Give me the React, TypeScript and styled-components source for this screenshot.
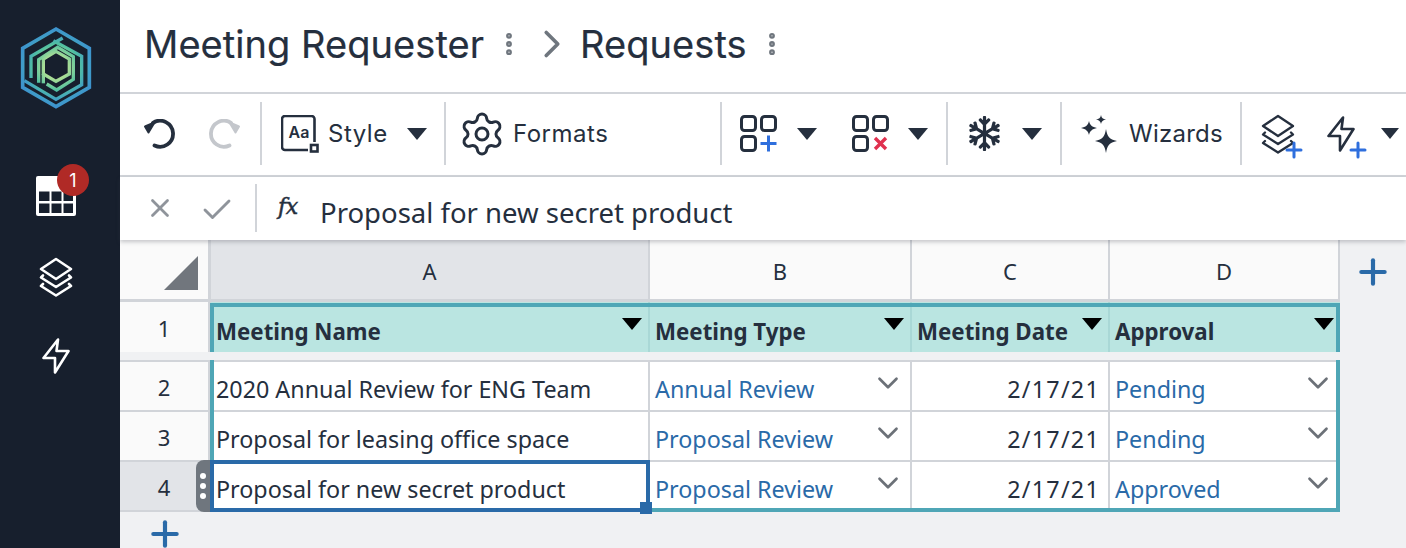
import React from "react";
import styled, { createGlobalStyle } from "styled-components";
import { Settings, X, Check, Plus, ChevronDown, ChevronRight, EllipsisVertical } from "lucide-react";
import { FaRegSnowflake } from "react-icons/fa";

const Global = createGlobalStyle`
  html, body { margin: 0; padding: 0; width: 1406px; height: 548px; overflow: hidden; background: #fff; }
  * { box-sizing: border-box; }
`;
const INK = "#252f3e";
const TEAL = "#4fa6b6";
const BLUE = "#2a6aa8";
const LINE = "#d1d4d9";
const COLS = "91px 439px 262px 198px 230px";

const Page = styled.div`display:flex;width:1406px;height:548px;overflow:hidden;font-family:"Noto Sans",sans-serif;color:${INK};`;
const Rail = styled.nav`width:120px;flex:none;background:#171f2d;display:flex;flex-direction:column;align-items:center;padding:24px 8px 0 0;color:#fff;`;
const RailItem = styled.div<{ $top: number }>`position:relative;margin-top:${p => p.$top}px;display:flex;`;
const Badge = styled.span`position:absolute;left:21px;top:-12px;width:32px;height:32px;border-radius:50%;background:#b02a26;color:#fff;font:18px "Inter",sans-serif;display:flex;align-items:center;justify-content:center;`;
const Main = styled.main`flex:1;min-width:0;display:flex;flex-direction:column;`;
const Header = styled.header`height:94px;flex:none;border-bottom:2px solid ${LINE};display:flex;align-items:center;padding:0 0 4px 24px;`;
const Title = styled.h1`margin:0;font:400 38px/1 "Inter",sans-serif;letter-spacing:0.05px;-webkit-text-stroke:0.2px ${INK};`;
const Toolbar = styled.div`height:83px;flex:none;border-bottom:2px solid ${LINE};display:flex;align-items:stretch;padding:8px 0 10px;overflow:hidden;`;
const Group = styled.div<{ $w: number; $gap?: number; $pad?: number }>`width:${p => p.$w}px;flex:none;display:flex;align-items:center;gap:${p => p.$gap ?? 0}px;padding-left:${p => p.$pad ?? 0}px;border-right:2px solid ${LINE};&:last-child{border-right:none;}`;
const Label = styled.span<{ $ml?: number; $ls?: number }>`font:400 24px/1 "Inter",sans-serif;letter-spacing:${p => p.$ls ?? 0.5}px;margin-left:${p => p.$ml ?? 0}px;`;
const Caret = styled.span<{ $ml?: number; $dark?: boolean; $w?: number }>`display:block;flex:none;margin-left:${p => p.$ml ?? 0}px;width:0;height:0;border-left:${p => p.$w ?? 10}px solid transparent;border-right:${p => p.$w ?? 10}px solid transparent;border-top:${p => (p.$w ?? 10) + 2}px solid ${p => p.$dark ? "#000" : INK};`;
const Formula = styled.div`height:63px;flex:none;display:flex;align-items:center;box-shadow:0 2px 4px rgba(60,65,75,.28);position:relative;z-index:1;background:#fff;`;
const FormulaIcons = styled.div`width:137px;height:48px;flex:none;margin-top:-2px;display:flex;align-items:center;padding-left:25px;border-right:2px solid ${LINE};color:#8f949b;`;
const CheckWrap = styled.span`display:flex;margin:4px 0 0 24px;`;
const Fx = styled.span`font:italic 400 22px/1 "DejaVu Serif",serif;-webkit-text-stroke:0.5px ${INK};margin:-4px 0 0 21px;width:42px;flex:none;letter-spacing:-0.5px;`;
const FormulaText = styled.span`font:400 27.5px/1 "Noto Sans",sans-serif;color:${INK};padding-top:9px;`;
const Sheet = styled.section`flex:1;min-height:0;background:#f0f1f3;position:relative;`;
const Row = styled.div<{ $h: number; $mb?: number }>`display:grid;grid-template-columns:${COLS};width:1220px;height:${p => p.$h}px;margin-bottom:${p => p.$mb ?? 0}px;`;
const Corner = styled.div`background:#fafafa;border-right:3px solid ${LINE};border-bottom:3px solid ${LINE};display:flex;justify-content:flex-end;align-items:flex-end;padding:0 10px 9px 0;`;
const ColHead = styled.div<{ $active?: boolean }>`background:${p => p.$active ? "#e2e4e8" : "#fafafa"};border-right:2px solid ${LINE};border-bottom:3px solid ${LINE};display:flex;align-items:center;justify-content:center;font:400 22px/1 "Noto Sans",sans-serif;padding-top:2px;`;
const RowHead = styled.div<{ $active?: boolean; $first?: boolean; $plain?: boolean }>`background:${p => p.$active ? "#e2e4e8" : "#fafafa"};border-right:3px solid ${LINE};border-bottom:${p => p.$plain ? "none" : `2px solid ${LINE}`};border-top:${p => p.$first ? `2px solid ${LINE}` : "none"};display:flex;align-items:center;justify-content:center;font:400 22px/1 "Noto Sans",sans-serif;padding:2px 0 0 0;`;
const HeadCell = styled.div`background:#bae5e1;border-right:2px solid #a9d8d6;position:relative;display:flex;align-items:center;padding:10px 0 0 5px;font:700 22.3px/1 "Noto Sans",sans-serif;&:last-child{border-right:none;}`;
const HeadCaret = styled.span`position:absolute;top:16px;right:6px;`;
const Cell = styled.div<{ $link?: boolean; $end?: boolean; $first?: boolean }>`background:#fff;border-right:2px solid ${LINE};border-bottom:2px solid ${LINE};border-top:${p => p.$first ? `2px solid ${LINE}` : "none"};position:relative;display:flex;align-items:center;justify-content:${p => p.$end ? "flex-end" : "flex-start"};padding:${p => p.$end ? "8px 8px 0 0" : "8px 0 0 5px"};font:400 23.3px/1 "Noto Sans",sans-serif;letter-spacing:${p => p.$end ? "1.25px" : "0"};white-space:nowrap;color:${p => p.$link ? BLUE : INK};&:last-child{border-right:none;}`;
const Chevron = styled.span`position:absolute;right:5px;top:4px;display:flex;color:#6c7178;`;
const AddCol = styled.span`position:absolute;left:1233px;top:12px;display:flex;color:${BLUE};`;
const AddRow = styled.span`position:absolute;left:25px;top:274px;display:flex;color:${BLUE};`;
const TealBox = styled.div<{ $top: number; $h: number; $noBottom?: boolean }>`position:absolute;left:90px;width:1130px;top:${p => p.$top}px;height:${p => p.$h}px;border:4px solid ${TEAL};${p => p.$noBottom ? "border-width:4px 4px 0;" : "border-top:none;"}pointer-events:none;`;
const Selected = styled.div`position:absolute;left:90px;top:220px;width:440px;height:52px;border:4px solid ${BLUE};pointer-events:none;`;
const Handle = styled.span`position:absolute;right:-6px;bottom:-6px;width:12px;height:12px;background:${BLUE};`;
const Grip = styled.div`position:absolute;left:76px;top:220px;width:14px;height:52px;background:#6f767e;border-radius:8px 0 0 8px;display:flex;flex-direction:column;align-items:center;justify-content:center;gap:4px;`;
const Dot = styled.i`display:block;width:6px;height:6px;border-radius:50%;background:#fff;`;
const PlusOver = styled.span<{ $r: number; $b: number }>`position:absolute;right:${p => p.$r}px;bottom:${p => p.$b}px;display:flex;color:#2f6fdd;`;
const IconWrap = styled.span<{ $ml?: number }>`position:relative;display:flex;flex:none;margin-left:${p => p.$ml ?? 0}px;`;
const TitleDots = styled.span<{ $ml: number }>`display:flex;margin-left:${p => p.$ml}px;color:#6f767e;`;
const Crumb = styled.span`display:flex;margin:0 5px 0 6px;color:#6f767e;`;

const Logo = () => (
  <svg width="80" height="88" viewBox="0 0 240 264" fill="none" strokeWidth="10">
    <defs>
      <radialGradient id="lg" gradientUnits="userSpaceOnUse" cx="120" cy="130" r="125">
        <stop offset="0" stopColor="#cfe68e" /><stop offset=".3" stopColor="#a6dc96" /><stop offset=".55" stopColor="#52c09f" /><stop offset=".8" stopColor="#3f9cc8" /><stop offset="1" stopColor="#3d8fd0" />
      </radialGradient>
    </defs>
    <g stroke="url(#lg)">
      <path d="M120 15 220 73V190L120 248 20 190V73z" strokeWidth="11" />
      <path d="M140 42 45 97V162" />
      <path d="M25 170 120 226 197 182V97L112 50" />
      <path d="M68 176V107L125 70 172 98V166L122 198 92 180" />
      <path d="M120 82 160 105V150L120 172 82 150V105z" />
      <path d="M82 150V178" />
    </g>
  </svg>
);
const TableIcon = () => (
  <svg width="40" height="40" viewBox="0 0 40 40">
    <rect width="40" height="40" rx="2" fill="#fff" />
    <g fill="#171f2d"><rect x="3" y="15.500" width="10.500" height="9.500" /><rect x="15.500" y="15.500" width="10" height="9.500" /><rect x="27.500" y="15.500" width="9.500" height="9.500" /><rect x="3" y="27.500" width="10.500" height="9.500" /><rect x="15.500" y="27.500" width="10" height="9.500" /><rect x="27.500" y="27.500" width="9.500" height="9.500" /></g>
  </svg>
);
const Layers = ({ sw = 2.6 }: { sw?: number }) => (
  <svg width="34" height="40" viewBox="0 0 34 40" fill="none" stroke="currentColor" strokeWidth={sw} strokeLinejoin="round" strokeLinecap="round">
    <path d="M17 2 32 12 17 22 2 12z" /><path d="M4 18.500 2 20.500 17 30 32 20.500 30 18.500" /><path d="M4 27 2 29 17 38.500 32 29 30 27" />
  </svg>
);
const Bolt = () => (
  <svg width="28" height="36" viewBox="0 0 28 36" fill="none" stroke="currentColor" strokeWidth="2.6" strokeLinejoin="round"><path d="M16 1.500 1.500 20H13V34.500L26.500 13H14.500z" /></svg>
);
const Undo = ({ flip, color }: { flip?: boolean; color: string }) => (
  <svg width="32" height="30" viewBox="0 0 32 30" fill="none" stroke={color} strokeWidth="3.8" style={{ transform: flip ? "scaleX(-1)" : undefined }}>
    <path d="M10 3.800A13 13 0 1 1 11.500 26.500" strokeLinecap="round" />
    <path d="M2 7.500 11.500 3.500 5.500 13.500z" fill={color} strokeWidth="2" strokeLinejoin="round" />
  </svg>
);
const StyleIcon = () => (
  <svg width="38" height="38" viewBox="0 0 38 38" fill="none">
    <path d="M33.500 27V4a3 3 0 0 0-3-3H4a3 3 0 0 0-3 3v28a3 3 0 0 0 3 3h23" stroke={INK} strokeWidth="2.6" />
    <text x="7.500" y="23" fontFamily="Inter" fontWeight="600" fontSize="16" fill={INK}>Aa</text>
    <rect x="30" y="30" width="6.500" height="6.500" stroke={INK} strokeWidth="2.6" />
  </svg>
);
const Blocks = ({ x }: { x?: boolean }) => (
  <svg width="37" height="37" viewBox="0 0 37 37" fill="none" stroke={INK} strokeWidth="3">
    <rect x="1.500" y="1.500" width="14" height="14" rx="3" /><rect x="21.500" y="1.500" width="14" height="14" rx="3" /><rect x="1.500" y="21.500" width="14" height="14" rx="3" />
    {x ? <path d="M23 23 34 34M34 23 23 34" stroke="#e0314f" strokeWidth="3.4" /> : <path d="M20.500 28.500h16M28.500 20.500v16" stroke="#2f6fdd" strokeWidth="3" />}
  </svg>
);
const Sparkles = () => (
  <svg width="38" height="38" viewBox="0 0 38 38" fill={INK}>
    <path d="M26 14 C27.500 22 29 24 37 26 C29 28 27.500 30 26 38 C24.500 30 23 28 15 26 C23 24 24.500 22 26 14Z" />
    <path d="M9 6 C10 10 12 12 17 13 C12 14 10 16 9 20 C8 16 6 14 1 13 C6 12 8 10 9 6Z" />
    <path d="M21 0 C21.500 3 23 4 26 4.500 C23 5 21.500 6.500 21 9 C20.500 6.500 19 5 16 4.500 C19 4 20.500 3 21 0Z" />
  </svg>
);

const rows = [
  { n: "2", a: "2020 Annual Review for ENG Team", b: "Annual Review", d: "Pending" },
  { n: "3", a: "Proposal for leasing office space", b: "Proposal Review", d: "Pending" },
  { n: "4", a: "Proposal for new secret product", b: "Proposal Review", d: "Approved" },
];

export default function App() {
  return (
    <Page>
      <Global />
      <Rail>
        <Logo />
        <RailItem $top={64}><TableIcon /><Badge>1</Badge></RailItem>
        <RailItem $top={41}><Layers /></RailItem>
        <RailItem $top={41}><Bolt /></RailItem>
      </Rail>
      <Main>
        <Header>
          <Title>Meeting Requester</Title>
          <TitleDots $ml={11}><EllipsisVertical size={28} strokeWidth={3} /></TitleDots>
          <Crumb><ChevronRight size={46} strokeWidth={1.9} /></Crumb>
          <Title>Requests</Title>
          <TitleDots $ml={11}><EllipsisVertical size={28} strokeWidth={3} /></TitleDots>
        </Header>
        <Toolbar>
          <Group $w={142} $gap={34} $pad={23}><Undo color={INK} /><Undo flip color="#c4c7cc" /></Group>
          <Group $w={184} $pad={19}><StyleIcon /><Label $ml={9}>Style</Label><Caret $ml={19} /></Group>
          <Group $w={276} $pad={12}><IconWrap><Settings size={48} strokeWidth={1.5} /></IconWrap><Label $ml={7}>Formats</Label></Group>
          <Group $w={226} $pad={18}><Blocks /><Caret $ml={20} /><IconWrap $ml={35}><Blocks x /></IconWrap><Caret $ml={19} /></Group>
          <Group $w={114} $pad={19}><FaRegSnowflake size={35} /><Caret $ml={20} /></Group>
          <Group $w={180} $pad={18}><Sparkles /><Label $ml={11} $ls={0.25}>Wizards</Label></Group>
          <Group $w={164} $pad={19}>
            <IconWrap><Layers sw={2.3} /><PlusOver $r={-11} $b={-8}><Plus size={24} strokeWidth={3} /></PlusOver></IconWrap>
            <IconWrap $ml={32}><Bolt /><PlusOver $r={-15} $b={-10}><Plus size={24} strokeWidth={3} /></PlusOver></IconWrap>
            <Caret $ml={26} $w={9} />
          </Group>
        </Toolbar>
        <Formula>
          <FormulaIcons><X size={30} strokeWidth={2.2} /><CheckWrap><Check size={36} strokeWidth={1.9} /></CheckWrap></FormulaIcons>
          <Fx>fx</Fx>
          <FormulaText>Proposal for new secret product</FormulaText>
        </Formula>
        <Sheet>
          <Row $h={62}>
            <Corner><svg width="34" height="34" viewBox="0 0 34 34"><path d="M34 0V34H0z" fill="#71767d" /></svg></Corner>
            <ColHead $active>A</ColHead><ColHead>B</ColHead><ColHead>C</ColHead><ColHead>D</ColHead>
          </Row>
          <Row $h={50} $mb={8}>
            <RowHead $plain>1</RowHead>
            <HeadCell>Meeting Name<HeadCaret><Caret $dark /></HeadCaret></HeadCell>
            <HeadCell>Meeting Type<HeadCaret><Caret $dark /></HeadCaret></HeadCell>
            <HeadCell>Meeting Date<HeadCaret><Caret $dark /></HeadCaret></HeadCell>
            <HeadCell>Approval<HeadCaret><Caret $dark /></HeadCaret></HeadCell>
          </Row>
          {rows.map((r, i) => (
            <Row key={r.n} $h={i === 0 ? 52 : 50}>
              <RowHead $active={i === 2} $first={i === 0}>{r.n}</RowHead>
              <Cell $first={i === 0}>{r.a}</Cell>
              <Cell $link $first={i === 0}>{r.b}<Chevron><ChevronDown size={34} strokeWidth={1.9} /></Chevron></Cell>
              <Cell $end $first={i === 0}>2/17/21</Cell>
              <Cell $link $first={i === 0}>{r.d}<Chevron><ChevronDown size={34} strokeWidth={1.9} /></Chevron></Cell>
            </Row>
          ))}
          <AddCol><Plus size={40} strokeWidth={2.5} /></AddCol>
          <AddRow><Plus size={40} strokeWidth={2.5} /></AddRow>
          <TealBox $top={63} $h={49} $noBottom />
          <TealBox $top={120} $h={152} />
          <Grip><Dot /><Dot /><Dot /></Grip>
          <Selected><Handle /></Selected>
        </Sheet>
      </Main>
    </Page>
  );
}
